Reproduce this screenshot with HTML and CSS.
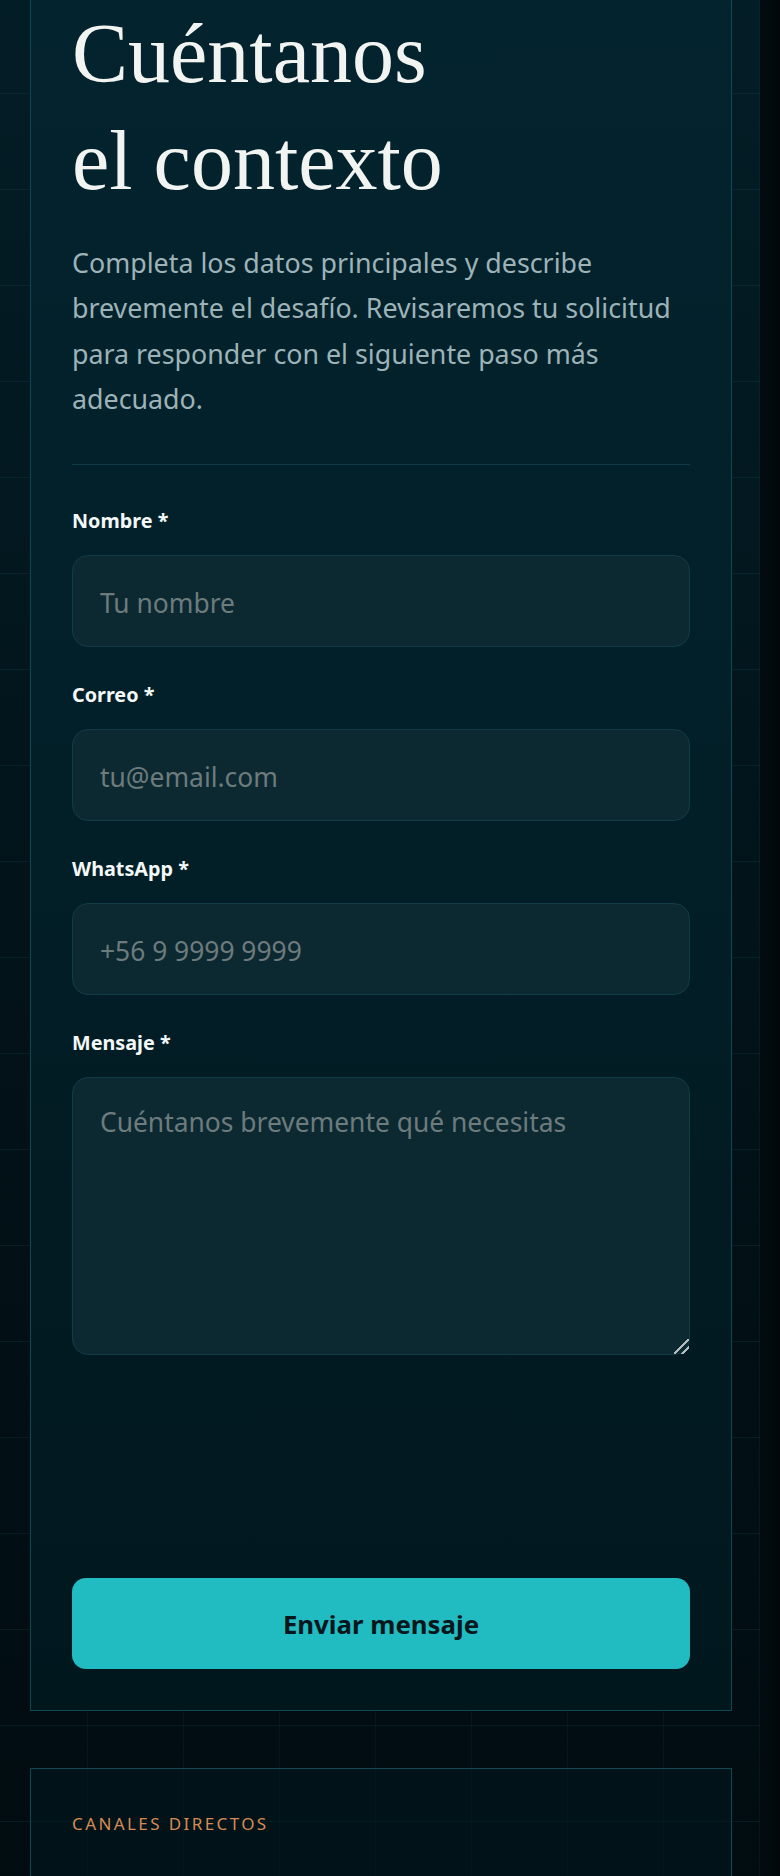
FILE: index.html
```html
<!DOCTYPE html>
<html lang="es">
<head>
<meta charset="utf-8">
<title>Cuéntanos el contexto</title>
<link rel="stylesheet" href="styles.css">
</head>
<body>
<div class="viewport">
  <main class="page">
    <section class="card card--form">
      <h1 class="title">Cuéntanos<br>el contexto</h1>
      <p class="lead">Completa los datos principales y describe brevemente el desafío. Revisaremos tu solicitud para responder con el siguiente paso más adecuado.</p>
      <hr class="divider">
      <form class="form">
        <div class="field">
          <label class="label" for="f-nombre">Nombre *</label>
          <input class="control" id="f-nombre" type="text" placeholder="Tu nombre">
        </div>
        <div class="field">
          <label class="label" for="f-correo">Correo *</label>
          <input class="control" id="f-correo" type="email" placeholder="tu@email.com">
        </div>
        <div class="field">
          <label class="label" for="f-wa">WhatsApp *</label>
          <input class="control" id="f-wa" type="tel" placeholder="+56 9 9999 9999">
        </div>
        <div class="field">
          <label class="label" for="f-msg">Mensaje *</label>
          <textarea class="control control--area" id="f-msg" placeholder="Cuéntanos brevemente qué necesitas"></textarea>
        </div>
        <button class="submit" type="button">Enviar mensaje</button>
      </form>
    </section>
    <section class="card card--channels">
      <p class="eyebrow">CANALES DIRECTOS</p>
    </section>
  </main>
  <div class="edge"></div>
</div>
</body>
</html>
```

FILE: styles.css
```css
* { box-sizing: border-box; }

html, body {
  margin: 0;
  padding: 0;
  background: #010a0e;
}

body {
  font-family: "Noto Sans", "DejaVu Sans", sans-serif;
  color: #eef4f4;
}

.viewport {
  display: flex;
  min-height: 1876px;
}

.page {
  flex: 1;
  padding: 0 28px 0 30px;
  background-color: #02141a;
  background-image:
    linear-gradient(to bottom, rgba(40, 150, 160, 0.10) 1px, transparent 1px),
    linear-gradient(to right, rgba(40, 150, 160, 0.07) 1px, transparent 1px),
    linear-gradient(to bottom, #031d26 0%, #021218 55%, #010c10 100%);
  background-size: 96px 96px, 96px 96px, 100% 100%;
  background-position: 0 93px, 87px 0, 0 0;
}

.edge {
  width: 20px;
  flex: none;
  background: linear-gradient(to right, #020c10, #01070a);
}

.card {
  border: 1px solid #114653;
}

.card--form {
  border-top: 0;
  padding: 0 41px 41px;
  background: linear-gradient(to bottom, #03232e 0%, #022029 40%, #021a22 75%, #01171e 100%);
}

.title {
  margin: 0;
  font-family: "Liberation Serif", "DejaVu Serif", serif;
  font-weight: 400;
  font-size: 84px;
  line-height: 107px;
  color: #f1f4f0;
  letter-spacing: 0;
}

.lead {
  margin: 26px 0 0;
  font-size: 26.8px;
  line-height: 45.3px;
  color: #9db3b8;
}

.divider {
  margin: 43px 0 0;
  border: 0;
  height: 1px;
  background: #0e3b45;
}

.form {
  display: flex;
  flex-direction: column;
  margin-top: 42px;
}

.field {
  display: flex;
  flex-direction: column;
  margin-bottom: 34px;
}

.field:last-of-type {
  margin-bottom: 0;
}

.label {
  font-size: 19.8px;
  font-weight: 700;
  line-height: 28px;
  color: #f3f8f8;
  margin-bottom: 20px;
}

.control {
  display: block;
  width: 100%;
  height: 92px;
  padding: 3px 27px 0;
  border: 1px solid #113c46;
  border-radius: 16px;
  background: #0c2932;
  color: #dfe9ea;
  font-family: "Noto Sans", "DejaVu Sans", sans-serif;
  font-size: 26.4px;
  outline: none;
}

.control::placeholder {
  color: #6d7b7d;
  opacity: 1;
}

.control--area {
  height: 278px;
  padding: 26px 27px;
  resize: vertical;
  line-height: normal;
}

.control--area::-webkit-resizer {
  width: 14px;
  height: 14px;
  background: linear-gradient(135deg,
    transparent 0 44%,
    #b3bcbe 44% 54%,
    transparent 54% 70%,
    #b3bcbe 70% 80%,
    transparent 80%);
}

.submit {
  margin-top: 223px;
  height: 91px;
  width: 100%;
  border: 0;
  border-radius: 14px;
  background: #21bcc1;
  color: #05161c;
  font-family: "Noto Sans", "DejaVu Sans", sans-serif;
  font-size: 25.8px;
  font-weight: 700;
  cursor: pointer;
}

.card--channels {
  margin-top: 57px;
  padding: 43px 41px 60px;
  background: rgba(2, 26, 33, 0.55);
}

.eyebrow {
  margin: 0;
  font-size: 17px;
  line-height: 23px;
  letter-spacing: 2.4px;
  color: #d68b55;
}
```
